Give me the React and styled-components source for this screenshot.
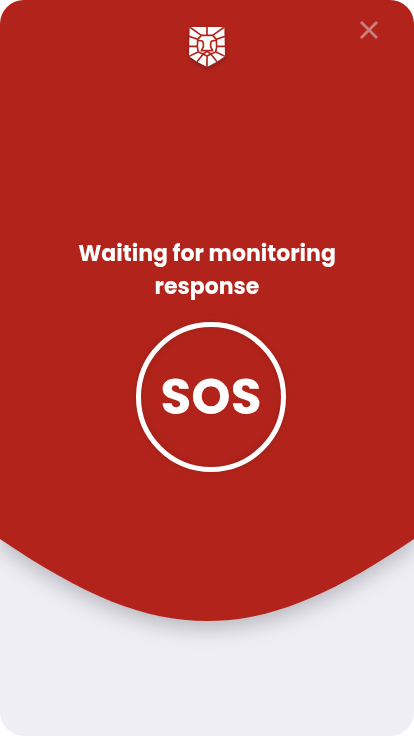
import React from "react";
import styled, { createGlobalStyle } from "styled-components";

const GlobalStyle = createGlobalStyle`
  *, *::before, *::after { box-sizing: border-box; }
  body { margin: 0; background: #ffffff; }
`;

const Screen = styled.main`
  min-height: 100vh;
  overflow: hidden;
  border-radius: 24px;
  background: #efeef5;
  color: #ffffff;
  font-family: Poppins, Inter, sans-serif;
`;

const Hero = styled.section`
  filter: drop-shadow(0 8px 10px rgba(0, 0, 0, 0.22));
`;

const Panel = styled.div`
  display: flex;
  flex-direction: column;
  align-items: center;
  padding-bottom: 67px;
  background: #b2241b;
`;

const Curve = styled.svg`
  display: block;
  width: 100%;
  height: 83px;
  margin-top: -1px;
  fill: #b2241b;
`;

const Header = styled.header`
  display: grid;
  grid-template-columns: 1fr auto 1fr;
  align-items: start;
  width: 100%;
  padding: 18px 33px 0;
`;

const Logo = styled.svg`
  grid-column: 2;
  width: 36px;
  height: 40px;
  margin-top: 9px;
  filter: drop-shadow(0 2px 2px rgba(0, 0, 0, 0.25));
`;

const CloseButton = styled.button`
  display: grid;
  place-items: center;
  justify-self: end;
  width: 24px;
  height: 24px;
  padding: 0;
  border: 0;
  background: none;
  color: #c97f7b;
  cursor: pointer;
`;

const Status = styled.h1`
  max-width: 300px;
  margin: 170px 0 0;
  font-size: 22px;
  font-weight: 700;
  line-height: 33px;
  text-align: center;
`;

const SosButton = styled.button`
  display: grid;
  place-items: center;
  width: 150px;
  height: 150px;
  margin: 19px 0 0 8px;
  padding: 0;
  border: 5px solid #ffffff;
  border-radius: 50%;
  background: none;
  box-shadow: 0 0 8px rgba(0, 0, 0, 0.12), inset 0 0 8px rgba(0, 0, 0, 0.12);
  color: inherit;
  font: inherit;
  font-size: 50px;
  font-weight: 700;
  line-height: 60px;
  cursor: pointer;
`;

function LionLogo() {
  return (
    <Logo viewBox="0 0 108 120" role="img" aria-label="Lion shield">
      <path fill="#fff" d="M2 0H106L108 88L84 104L54 120L24 104L0 88Z" />
      <g fill="none" stroke="#b2241b" strokeWidth="5" strokeLinejoin="round">
        <path d="M54 0V24M2 0L37 25M106 0L71 25M0 28L26 37M108 28L82 37M0 58H25M108 58H83M0 88L27 75M108 88L81 75M24 104L42 82M84 104L66 82M54 86V120" />
        <path d="M37 25H71L82 37L83 60L80 75L66 81L54 73L42 81L28 75L25 60L26 37Z" />
        <path d="M27 40L40 42L43 47V60L37 71H71L65 60V47L68 42L81 40M42 81L54 87L66 81" />
      </g>
    </Logo>
  );
}

export default function App() {
  return (
    <>
      <GlobalStyle />
      <Screen>
        <Hero>
          <Panel>
            <Header>
              <LionLogo />
              <CloseButton type="button" aria-label="Close">
                <svg width="18" height="18" viewBox="0 0 18 18" fill="none" stroke="currentColor" strokeWidth="2.8">
                  <path d="M1 1L17 17M17 1L1 17" />
                </svg>
              </CloseButton>
            </Header>
            <Status>Waiting for monitoring response</Status>
            <SosButton type="button">SOS</SosButton>
          </Panel>
          <Curve viewBox="0 0 414 83" preserveAspectRatio="none" aria-hidden="true">
            <path d="M0 0H414V1C330 58 270 83 207 83S84 58 0 1Z" />
          </Curve>
        </Hero>
      </Screen>
    </>
  );
}
